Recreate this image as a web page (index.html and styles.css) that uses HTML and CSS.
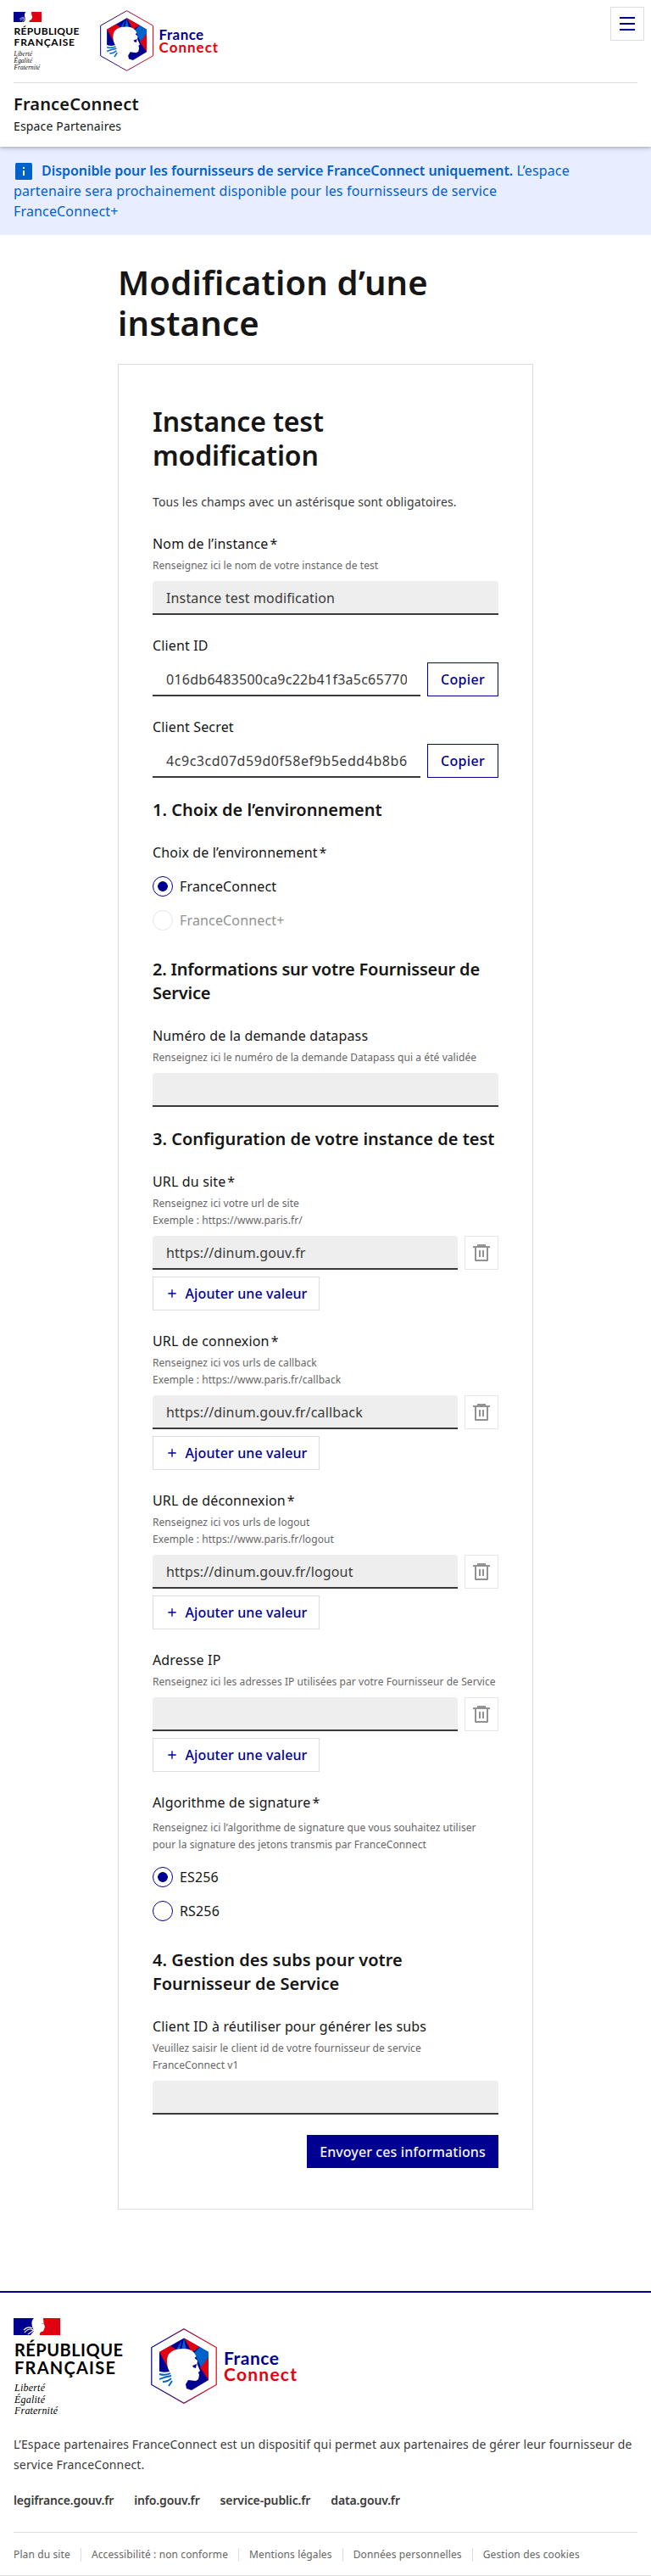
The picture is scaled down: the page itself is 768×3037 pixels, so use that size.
FILE: index.html
```html
<!DOCTYPE html>
<html lang="fr">
<head>
<meta charset="utf-8">
<title>Modification d’une instance</title>
<link rel="stylesheet" href="styles.css">
</head>
<body>
<svg class="defs" width="0" height="0" aria-hidden="true">
  <defs>
    <linearGradient id="edge" x1="0" x2="1" y1="0" y2="0"><stop offset="0.1" stop-color="#000091"/><stop offset="0.9" stop-color="#e1000f"/></linearGradient>
    <symbol id="flag" viewBox="0 0 55 20">
      <path fill="#000091" d="M0 0H24Q21 3 21.500 7L22 10 24 15 20 20H0Z"/>
      <path fill="#e1000f" d="M35 0H55V20H31Q30 16 35 15.500L36 13 37 10 35.500 6Z"/>
      <path d="M12 14Q17 9 22 12M13 17Q18 11 23 14M17 19L24 14" fill="none" stroke="#fff" stroke-width="1.200"/>
      <path d="M33.500 6.500h2" stroke="#777" stroke-width=".8"/>
    </symbol>
    <symbol id="hexagon" viewBox="0 0 78 89">
      <path d="M39 .8 77.200 22.500V66.500L39 88.200.8 66.500V22.500Z" fill="#fff" stroke="url(#edge)" stroke-width="1.200"/>
      <path fill="#000091" d="M39 11.500 68 28V61L48 73 10 61V28Z"/>
      <path fill="#e1000f" d="M10 28 23 20.500 33 27 20 46Z M39 11.500 58 22 48 28Z M68 34V61L58 46Z"/>
      <path fill="#0063cb" d="M36.500 14 33 27H29Z M39 11.500 42 26H36Z M51 29 58 22 68 28V34L59 46Z"/>
      <path fill="#fff" d="M19 40Q18 24 39 24 50 24 53.500 33L51.500 35 55 38 54.500 42 58 50 56 52 57 55 56 60 53 62 44 61 41 66 42 71 48 74 39 80 8 64V50Q14 53 22 51 19 46 19 40Z"/>
      <path fill="#000091" d="M49 44 54 42 53 47 50 46Z"/>
      <path fill="none" stroke="#0063cb" stroke-width="1.900" d="M10 54Q17 56 23 53M10 60Q17 57 24 56M14 63Q20 63 24 59M21 68 25 62"/>
    </symbol>
    <symbol id="trash" viewBox="0 0 24 24"><path fill="currentColor" d="M17 4h5v2h-2v15a1 1 0 0 1-1 1H5a1 1 0 0 1-1-1V6H2V4h5V2h10v2Zm1 2H6v14h12V6Zm-9 3h2v8H9V9Zm4 0h2v8h-2V9Z"/></symbol>
    <symbol id="plus" viewBox="0 0 24 24"><path fill="currentColor" d="M11 11V5h2v6h6v2h-6v6h-2v-6H5v-2Z"/></symbol>
  </defs>
</svg>
<header class="header">
  <div class="header-brand">
    <svg class="rf-small" viewBox="0 0 140 124" role="img" aria-label="République Française">
      <use href="#flag" x="0" y="0" width="55" height="20"/>
      <g class="rf-name"><text x="1" y="45" textLength="128">RÉPUBLIQUE</text><text x="1" y="66" textLength="119">FRANÇAISE</text></g>
      <g class="rf-motto"><text x="1" y="86" textLength="36">Liberté</text><text x="1" y="99.500" textLength="36">Égalité</text><text x="1" y="113" textLength="51">Fraternité</text></g>
    </svg>
    <svg class="fc-small" viewBox="0 0 173 89" role="img" aria-label="FranceConnect">
      <use href="#hexagon" width="78" height="89"/>
      <text class="fc-france" x="86" y="43" textLength="65">France</text><text class="fc-connect" x="86" y="61.500" textLength="86">Connect</text>
    </svg>
    <button class="menu" aria-label="Menu"><span></span><span></span><span></span></button>
  </div>
  <div class="header-service">
    <p class="service-title">FranceConnect</p>
    <p class="service-tagline">Espace Partenaires</p>
  </div>
</header>
<div class="notice">
  <p><svg class="info" viewBox="0 0 20 20"><rect width="20" height="20" rx="1.500" fill="#0063cb"/><path fill="#fff" d="M9 5h2v2H9zM9 9h2v6H9z"/></svg><strong>Disponible pour les fournisseurs de service FranceConnect uniquement.</strong> L’espace<br>partenaire sera prochainement disponible pour les fournisseurs de service<br>FranceConnect+</p>
</div>
<main class="main">
  <h1>Modification d’une<br>instance</h1>
  <form class="card">
    <h2>Instance test<br>modification</h2>
    <p class="required">Tous les champs avec un astérisque sont obligatoires.</p>
    <div class="field">
      <label>Nom de l’instance<i>*</i></label>
      <p class="hint">Renseignez ici le nom de votre instance de test</p>
      <div class="input">Instance test modification</div>
    </div>
    <div class="field">
      <label>Client ID</label>
      <div class="row"><div class="input readonly client-id">016db6483500ca9c22b41f3a5c65770c</div><button type="button" class="btn outline">Copier</button></div>
    </div>
    <div class="field">
      <label>Client Secret</label>
      <div class="row"><div class="input readonly client-secret">4c9c3cd07d59d0f58ef9b5edd4b8b6</div><button type="button" class="btn outline">Copier</button></div>
    </div>
    <h3>1. Choix de l’environnement</h3>
    <div class="field">
      <label>Choix de l’environnement<i>*</i></label>
      <div class="radios">
        <div class="radio"><span class="dot on"></span>FranceConnect</div>
        <div class="radio disabled"><span class="dot"></span>FranceConnect+</div>
      </div>
    </div>
    <h3 class="after-radios tight">2. Informations sur votre Fournisseur de<br>Service</h3>
    <div class="field">
      <label>Numéro de la demande datapass</label>
      <p class="hint">Renseignez ici le numéro de la demande Datapass qui a été validée</p>
      <div class="input"></div>
    </div>
    <h3>3. Configuration de votre instance de test</h3>
    <div class="field">
      <label>URL du site<i>*</i></label>
      <p class="hint">Renseignez ici votre url de site<br>Exemple : https://www.paris.fr/</p>
      <div class="row"><div class="input">https://dinum.gouv.fr</div><button type="button" class="trash"><svg viewBox="0 0 24 24"><use href="#trash"/></svg></button></div>
      <button type="button" class="btn add"><svg><use href="#plus"/></svg>Ajouter une valeur</button>
    </div>
    <div class="field">
      <label>URL de connexion<i>*</i></label>
      <p class="hint">Renseignez ici vos urls de callback<br>Exemple : https://www.paris.fr/callback</p>
      <div class="row"><div class="input">https://dinum.gouv.fr/callback</div><button type="button" class="trash"><svg viewBox="0 0 24 24"><use href="#trash"/></svg></button></div>
      <button type="button" class="btn add"><svg><use href="#plus"/></svg>Ajouter une valeur</button>
    </div>
    <div class="field">
      <label>URL de déconnexion<i>*</i></label>
      <p class="hint">Renseignez ici vos urls de logout<br>Exemple : https://www.paris.fr/logout</p>
      <div class="row"><div class="input">https://dinum.gouv.fr/logout</div><button type="button" class="trash"><svg viewBox="0 0 24 24"><use href="#trash"/></svg></button></div>
      <button type="button" class="btn add"><svg><use href="#plus"/></svg>Ajouter une valeur</button>
    </div>
    <div class="field">
      <label>Adresse IP</label>
      <p class="hint">Renseignez ici les adresses IP utilisées par votre Fournisseur de Service</p>
      <div class="row"><div class="input"></div><button type="button" class="trash"><svg viewBox="0 0 24 24"><use href="#trash"/></svg></button></div>
      <button type="button" class="btn add"><svg><use href="#plus"/></svg>Ajouter une valeur</button>
    </div>
    <div class="field">
      <label>Algorithme de signature<i>*</i></label>
      <p class="hint legend-hint">Renseignez ici l’algorithme de signature que vous souhaitez utiliser<br>pour la signature des jetons transmis par FranceConnect</p>
      <div class="radios">
        <div class="radio"><span class="dot on"></span>ES256</div>
        <div class="radio"><span class="dot"></span>RS256</div>
      </div>
    </div>
    <h3 class="after-radios">4. Gestion des subs pour votre<br>Fournisseur de Service</h3>
    <div class="field">
      <label>Client ID à réutiliser pour générer les subs</label>
      <p class="hint">Veuillez saisir le client id de votre fournisseur de service<br>FranceConnect v1</p>
      <div class="input"></div>
    </div>
    <button type="button" class="btn submit">Envoyer ces informations</button>
  </form>
</main>
<footer class="footer">
  <div class="footer-brand">
    <svg class="rf-large" viewBox="0 0 140 124" role="img" aria-label="République Française">
      <use href="#flag" width="55" height="20"/>
      <g class="rf-name"><text x="1" y="45" textLength="128">RÉPUBLIQUE</text><text x="1" y="66" textLength="119">FRANÇAISE</text></g>
      <g class="rf-motto"><text x="1" y="86" textLength="36">Liberté</text><text x="1" y="99.500" textLength="36">Égalité</text><text x="1" y="113" textLength="51">Fraternité</text></g>
    </svg>
    <svg class="fc-large" viewBox="0 0 173 89" role="img" aria-label="FranceConnect">
      <use href="#hexagon" width="78" height="89"/>
      <text class="fc-france" x="86" y="43" textLength="65">France</text><text class="fc-connect" x="86" y="61.500" textLength="86">Connect</text>
    </svg>
  </div>
  <p class="footer-desc">L’Espace partenaires FranceConnect est un dispositif qui permet aux partenaires de gérer leur fournisseur de<br>service FranceConnect.</p>
  <nav class="footer-links"><a>legifrance.gouv.fr</a><a>info.gouv.fr</a><a>service-public.fr</a><a>data.gouv.fr</a></nav>
  <nav class="footer-bottom"><a>Plan du site</a><a>Accessibilité : non conforme</a><a>Mentions légales</a><a>Données personnelles</a><a>Gestion des cookies</a></nav>
</footer>
</body>
</html>
```
FILE: styles.css
```css
* { box-sizing: border-box; margin: 0; padding: 0; }
body { background: #fff; color: #161616; font: 16px/24px "Noto Sans", "Open Sans", sans-serif; letter-spacing: .15px; }
button { font: inherit; letter-spacing: inherit; background: none; border: 0; }
.defs { position: absolute; }

.header { position: relative; height: 173px; background: #fff; box-shadow: 0 1px 3px rgba(0,0,18,.16), 0 2px 6px rgba(0,0,18,.16); }
.header-brand { height: 98px; margin: 0 16px; border-bottom: 1px solid #ddd; display: flex; align-items: flex-start; }
.rf-small { width: 84px; height: 74.400px; margin-top: 14px; flex: none; }
.fc-small { width: 140px; height: 72px; margin: 12px 0 0 18px; flex: none; }
.menu { width: 40px; height: 40px; border: 1px solid #ddd; margin: 8px -8px 0 auto; display: flex; flex-direction: column; align-items: center; justify-content: center; gap: 5px; }
.menu span { width: 18px; height: 2px; background: #000091; }
.header-service { padding: 11px 16px 0; }
.service-title { font-size: 20px; line-height: 28px; font-weight: 600; }
.service-tagline { font-size: 14px; line-height: 24px; }

.notice { height: 104px; padding: 16px; background: #e8edff; color: #0063cb; white-space: nowrap; }
.notice strong { font-weight: 600; letter-spacing: -.05px; }
.info { width: 20px; height: 20px; margin: 0 11px 0 2px; vertical-align: -5px; }

.main { width: 490px; margin: 0 auto; padding: 32px 0 96px; }
h1, h2, h3 { font-weight: 600; }
h1 { font-size: 40px; line-height: 48px; letter-spacing: .2px; }
h2 { font-size: 32px; line-height: 40px; letter-spacing: -.15px; }
h3 { font-size: 20px; line-height: 28px; margin-top: 24px; white-space: nowrap; letter-spacing: 0; }
.after-radios { margin-top: 32px; }
.tight { letter-spacing: -.2px; }
.card { margin-top: 24px; height: 2176px; padding: 47px 40px 48px; border: 1px solid #ddd; display: flex; flex-direction: column; }
.required { font-size: 14px; color: #3a3a3a; margin-top: 23px; margin-bottom: 1px; white-space: nowrap; letter-spacing: .12px; }
.field { display: flex; flex-direction: column; align-items: stretch; margin-top: 24px; }
label i { font-style: normal; margin-left: 2px; }
.hint { margin-top: 4px; font-size: 12px; line-height: 20px; color: #666; white-space: nowrap; letter-spacing: .07px; }
.legend-hint { margin-top: 8px; }
.input { height: 40px; margin-top: 8px; padding: 8px 16px; border-radius: 4px 4px 0 0; background: #eee; box-shadow: inset 0 -2px #3a3a3a; color: #3a3a3a; flex: 1 0 40px; min-width: 0; white-space: nowrap; }
.row { display: flex; gap: 8px; margin-top: 8px; }
.row .input { margin-top: 0; flex: 1 1 0; }
.readonly { border-radius: 0; padding: 8px 0; border: solid transparent; border-width: 0 16px; overflow: hidden; box-shadow: none; }
.row .readonly { background: linear-gradient(#3a3a3a,#3a3a3a) 0 100% / 100% 2px no-repeat border-box; }
.client-id { letter-spacing: .25px; }
.client-secret { letter-spacing: .55px; }
.btn { height: 40px; color: #000091; font-weight: 500; white-space: nowrap; display: flex; align-items: center; justify-content: center; letter-spacing: .1px; }
.outline { width: 84px; border: 1px solid #000091; letter-spacing: .3px; }
.trash { width: 40px; height: 40px; border: 1px solid #e5e5e5; color: #929292; display: flex; align-items: center; justify-content: center; }
.trash svg { width: 24px; height: 24px; }
.add { width: 197px; margin-top: 8px; border: 1px solid #ddd; align-self: flex-start; gap: 8px; }
.add svg { width: 16px; height: 16px; }
.submit { width: 226px; margin-top: 24px; align-self: flex-end; background: #000091; color: #f5f5fe; }
.radios { display: flex; flex-direction: column; gap: 16px; margin-top: 16px; }
.radio { height: 24px; display: flex; align-items: center; gap: 8px; }
.dot { width: 24px; height: 24px; border: 1px solid #000091; border-radius: 50%; }
.on { background: radial-gradient(circle, #000091 5.500px, transparent 6.200px); }
.disabled { color: #929292; }
.disabled .dot { border-color: #e5e5e5; }

.footer { height: 336px; border-top: 2px solid #000091; border-bottom: 1px solid #ddd; padding: 30px 16px 0; }
.footer-brand { display: flex; align-items: flex-start; height: 137px; }
.rf-large { width: 140px; height: 124px; flex: none; }
.fc-large { width: 173px; height: 89px; margin: 12px 0 0 22px; flex: none; }
.footer-desc { font-size: 14px; color: #3a3a3a; white-space: nowrap; letter-spacing: .14px; }
.footer-links { margin-top: 18px; height: 49px; display: flex; gap: 24px; font-size: 14px; font-weight: 600; color: #3a3a3a; letter-spacing: -.14px; }
.footer-bottom { border-top: 1px solid #ddd; padding-top: 18px; display: flex; font-size: 12px; line-height: 16px; color: #666; white-space: nowrap; letter-spacing: .12px; }
.footer-bottom a + a { margin-left: 12px; padding-left: 12px; border-left: 1px solid #ddd; }

.rf-name { font: 700 20px Lato, sans-serif; fill: #000; letter-spacing: 0; }
.rf-motto { font: italic 12px "Liberation Serif", serif; fill: #000; letter-spacing: 0; }
.fc-france, .fc-connect { font: 700 21px Lato, sans-serif; letter-spacing: 0; fill: #000091; }
.fc-connect { fill: #e1000f; }
```
